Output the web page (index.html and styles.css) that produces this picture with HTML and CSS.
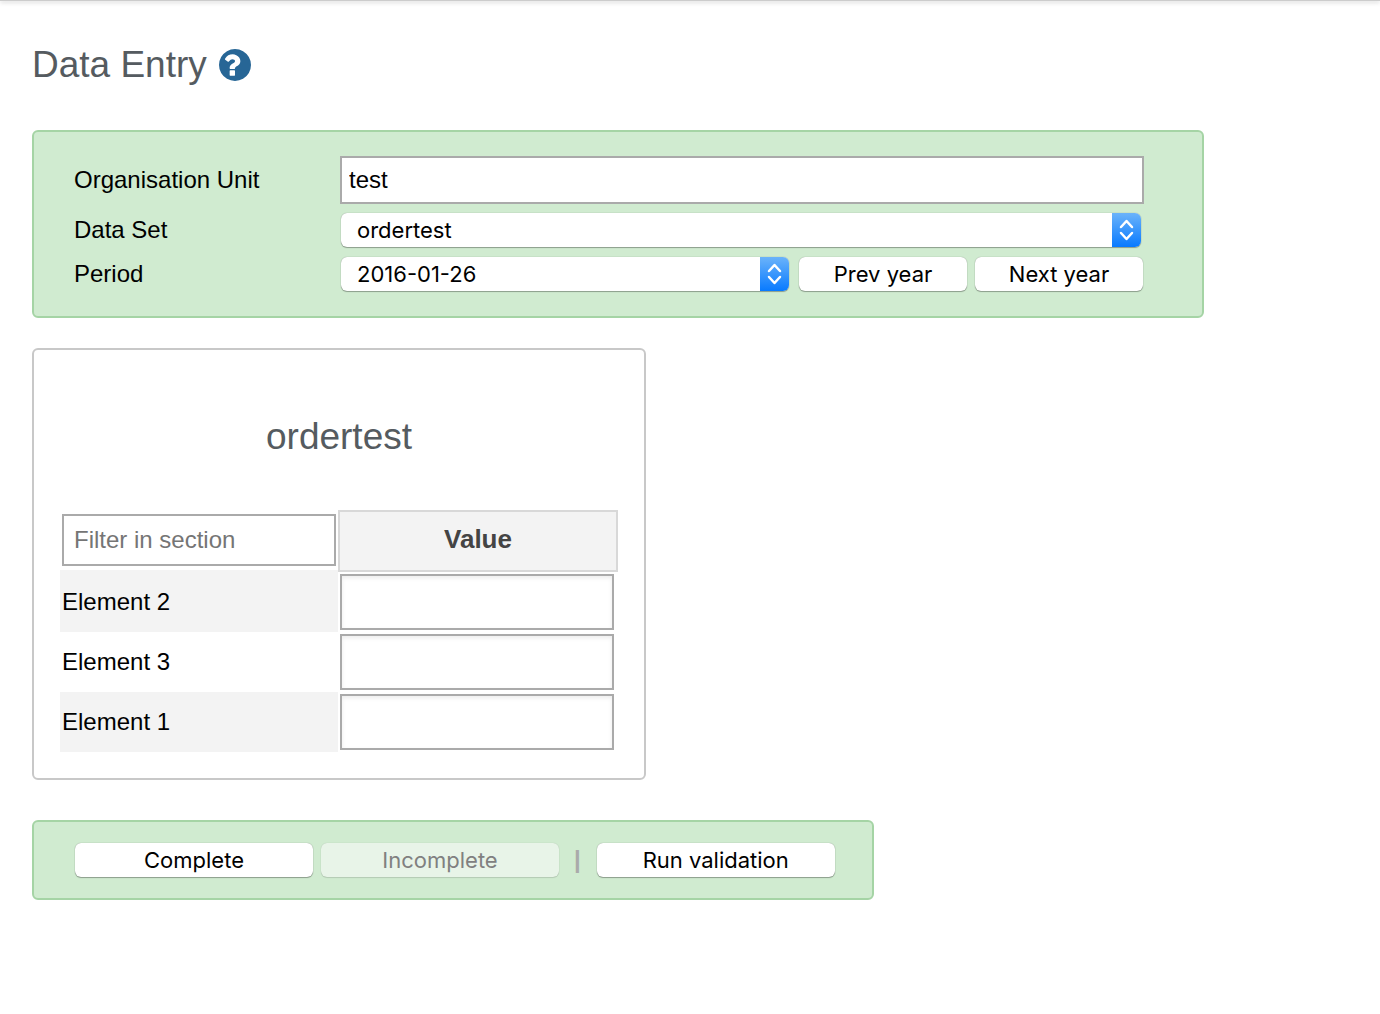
FILE: index.html
```
<!doctype html>
<html lang="en">
<head>
<title>Data Entry</title>
<meta charset="utf-8">
<meta name="viewport" content="width=device-width, initial-scale=1">
<link rel="stylesheet" href="styles.css">
</head>
<body>
<div class="topline"></div>
<main class="page">
	<h1 class="title">Data Entry
		<a class="help" href="#help" aria-label="Help">
			<svg viewBox="128 128 1536 1536" width="32" height="32"><path d="M896 1376v-192q0-14-9-23t-23-9h-192q-14 0-23 9t-9 23v192q0 14 9 23t23 9h192q14 0 23-9t9-23zM1152 704q0-88-55.5-163t-138.5-116-170-41q-243 0-371 213-15 24 8 42l132 100q7 6 19 6 16 0 25-12 53-68 86-92 34-24 86-24 48 0 85.5 26t37.5 59q0 38-20 61t-68 45q-63 28-115.500 86.500t-52.500 125.500v36q0 14 9 23t23 9h192q14 0 23-9t9-23q0-19 21.500-49.500t54.500-49.500q32-18 49-28.500t46-35 44.500-48 28-60.500 12.500-81zM1664 896q0 209-103 385.500t-279.500 279.500-385.500 103-385.500-103-279.500-279.500-103-385.500 103-385.500 279.500-279.500 385.500-103 385.500 103 279.500 279.500 103 385.500z"/></svg>
		</a>
	</h1>

	<form class="panel selection">
		<label for="orgunit">Organisation Unit</label>
		<input id="orgunit" class="field" type="text" value="test" readonly>

		<label for="dataset">Data Set</label>
		<div class="controls">
			<div class="select dataset">
				<select id="dataset"><option>ordertest</option></select>
				<span class="arrows"><svg viewBox="0 0 29 34" width="29" height="34"><path d="M9 14l5.500-6 5.500 6M9 20l5.500 6 5.500-6"/></svg></span>
			</div>
		</div>

		<label for="period">Period</label>
		<div class="controls">
			<div class="select period">
				<select id="period"><option>2016-01-26</option></select>
				<span class="arrows"><svg viewBox="0 0 29 34" width="29" height="34"><path d="M9 14l5.500-6 5.500 6M9 20l5.500 6 5.500-6"/></svg></span>
			</div>
			<button type="button" class="btn year">Prev year</button>
			<button type="button" class="btn year">Next year</button>
		</div>
	</form>

	<section class="entry">
		<h2>ordertest</h2>
		<table>
			<thead>
				<tr>
					<td class="filter"><input type="text" placeholder="Filter in section" aria-label="Filter in section"></td>
					<th scope="col">Value</th>
				</tr>
			</thead>
			<tbody>
				<tr>
					<td class="name"><label for="el2">Element 2</label></td>
					<td class="value"><input id="el2" type="text"></td>
				</tr>
				<tr>
					<td class="name"><label for="el3">Element 3</label></td>
					<td class="value"><input id="el3" type="text"></td>
				</tr>
				<tr>
					<td class="name"><label for="el1">Element 1</label></td>
					<td class="value"><input id="el1" type="text"></td>
				</tr>
			</tbody>
		</table>
	</section>

	<div class="panel actions">
		<button type="button" class="btn">Complete</button>
		<button type="button" class="btn" disabled>Incomplete</button>
		<span class="sep">|</span>
		<button type="button" class="btn">Run validation</button>
	</div>
</main>
</body>
</html>
```

FILE: styles.css
```
* {
	box-sizing: border-box;
}
body {
	margin: 0;
	background: #fff;
	color: #000;
	font: 24px/28px "Liberation Sans", Arial, sans-serif;
}
input, select, button {
	font: inherit;
	color: inherit;
}

.topline {
	height: 1px;
	background: #ccc;
	box-shadow: 0 1px 4px rgba(0,0,0,0.4);
}
.page {
	padding: 42px 32px;
}

.title, .entry h2 {
	margin: 0;
	color: #555b60;
	font-size: 37px;
	font-weight: normal;
	line-height: 44px;
}
.title {
	display: flex;
	align-items: center;
	gap: 12px;
	margin-bottom: 43px;
}
.help {
	display: flex;
}
.help svg {
	fill: #276696;
}

.panel {
	background: #d0ebd0;
	border: 2px solid #a5d4a5;
	border-radius: 6px;
}

/* selection form */
.selection {
	display: grid;
	grid-template-columns: 266px 1fr;
	gap: 8px 0;
	align-items: center;
	max-width: 1172px;
	margin-bottom: 30px;
	padding: 24px 58px 24px 40px;
}
.field {
	width: 100%;
	height: 48px;
	padding: 0 7px;
	background: #fff;
	border: 2px solid #aaa;
}
.controls {
	display: flex;
	align-items: center;
	gap: 8px;
	height: 36px;
	padding: 0 1px;
}
.select {
	position: relative;
	flex: 1;
	margin-right: 2px;
}
.select select {
	display: block;
	width: 100%;
	height: 34px;
	padding: 0 36px 0 16px;
	appearance: none;
	background: #fff;
	border: 0;
	border-radius: 6px;
	box-shadow: 0 0 1px rgba(0,0,0,0.4), 0 1px 1px rgba(0,0,0,0.3);
	font: 22px/34px Inter, sans-serif;
}
.arrows {
	position: absolute;
	top: 0;
	right: 0;
	border-radius: 0 6px 6px 0;
	background: linear-gradient(#6bb3fa, #087aff);
	pointer-events: none;
}
.arrows svg {
	display: block;
	fill: none;
	stroke: #fff;
	stroke-width: 2.5;
	stroke-linecap: round;
	stroke-linejoin: round;
}

.btn {
	width: 238px;
	height: 34px;
	padding: 0;
	background: #fff;
	border: 0;
	border-radius: 6px;
	box-shadow: 0 0 1px rgba(0,0,0,0.4), 0 1px 1px rgba(0,0,0,0.3);
	font: 22px/34px Inter, sans-serif;
}
.btn:disabled {
	background: #e8f4e8;
	color: #808080;
	box-shadow: 0 0 1px rgba(0,0,0,0.2), 0 1px 1px rgba(0,0,0,0.12);
}
.year {
	width: 168px;
}

/* data entry table */
.entry {
	width: fit-content;
	margin-bottom: 40px;
	padding: 26px;
	border: 2px solid #c8c8c8;
	border-radius: 6px;
}
.entry h2 {
	padding: 39px 0 51px;
	text-align: center;
}
.entry table {
	border-spacing: 0;
}
.entry td, .entry th {
	padding: 0;
}
.entry th {
	width: 280px;
	height: 62px;
	padding-bottom: 4px;
	background: #f3f3f3;
	border: 2px solid #d8d8d8;
	color: #444;
	font-size: 26px;
}
.entry .name {
	width: 278px;
	height: 60px;
	padding: 0 2px;
}
.entry .filter {
	padding: 0 2px;
	border-bottom: 2px solid #f3f3f3;
}
.entry .value {
	padding: 0 2px;
}
.entry tr:nth-child(odd) .name {
	background: #f3f3f3;
}
.entry input {
	display: block;
	width: 274px;
	height: 56px;
	padding: 0 10px;
	border: 2px solid #aaa;
	box-shadow: inset 0 2px 4px rgba(0,0,0,0.08);
}
.entry .filter input {
	height: 52px;
	box-shadow: none;
}
.entry input::placeholder {
	color: #757575;
}

.actions {
	display: flex;
	flex-wrap: wrap;
	gap: 8px;
	width: fit-content;
	padding: 21px 37px 21px 41px;
}
.sep {
	padding: 0 8px 0 7px;
	color: #aaa;
	font-weight: bold;
	line-height: 34px;
}
```
